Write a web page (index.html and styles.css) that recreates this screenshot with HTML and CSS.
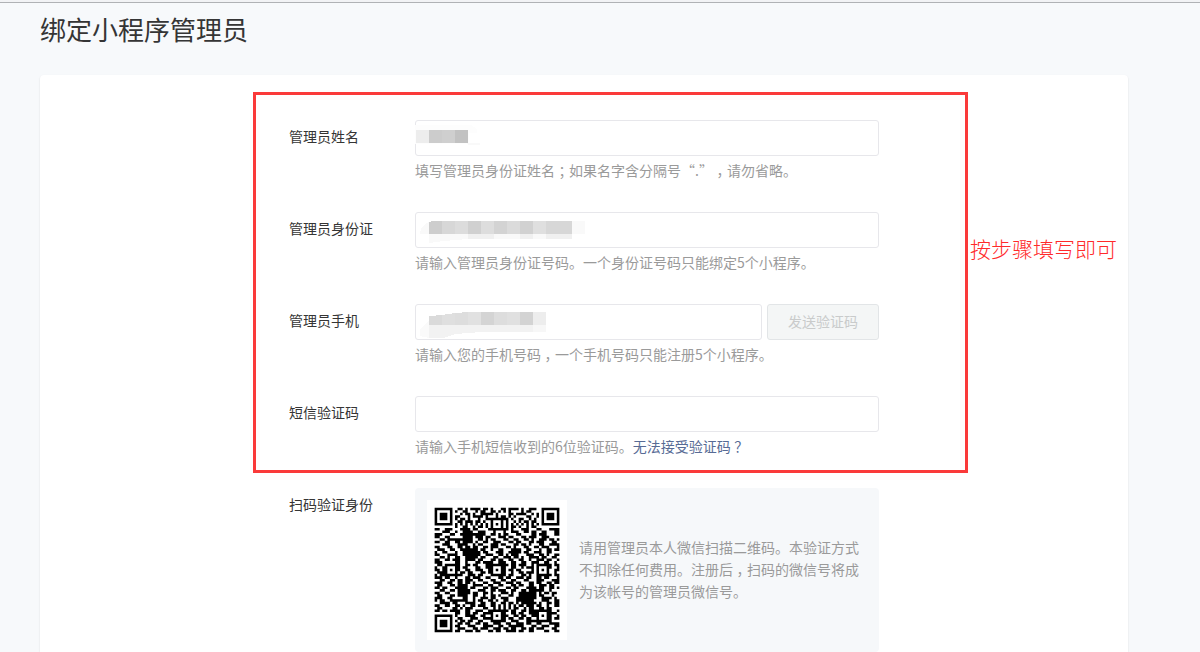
FILE: index.html
```html
<!DOCTYPE html>
<html lang="zh-CN">
<head>
<meta charset="utf-8">
<meta name="viewport" content="width=device-width, initial-scale=1">
<title>绑定小程序管理员</title>
<link rel="stylesheet" href="styles.css">
</head>
<body>
<header class="page-head">
  <h1 class="page-title">绑定小程序管理员</h1>
</header>
<main class="card">
  <form class="form">
    <div class="row">
      <label class="label" for="name">管理员姓名</label>
      <div class="control">
        <div class="field">
          <input class="input" id="name" type="text">
          <svg class="mosaic" viewBox="0 0 180 36" aria-hidden="true" shape-rendering="crispEdges">
            <path fill="#fdfdfd" d="M0 5h56l6 4v4H54v11H0z"/>
            <path fill="#ededed" d="M1 10h13v13H1z"/><path fill="#cccccc" d="M14 10h13v13H14z"/>
            <path fill="#cfcfcf" d="M27 10h13v13H27z"/><path fill="#c2c2c2" d="M40 10h13v13H40z"/>
            <path fill="#f9f9f9" d="M51 23h14v2H53z"/>
          </svg>
        </div>
        <p class="hint">填写管理员身份证姓名<span class="mid">；</span>如果名字含分隔号“.”<span class="mid">，</span>请勿省略。</p>
      </div>
    </div>
    <div class="row">
      <label class="label" for="idno">管理员身份证</label>
      <div class="control">
        <div class="field">
          <input class="input" id="idno" type="text">
          <svg class="mosaic" viewBox="0 0 180 36" aria-hidden="true" shape-rendering="crispEdges">
            <path fill="#f9f9f9" d="M5 22q0-8 9-12v12zM14 22h143v5H53l-24 2-15 2zM157 9h13v13h-13z"/>
            <path fill="#cdcdcd" d="M14 10l4-1h9v13H14z"/><path fill="#d7d7d7" d="M27 9h13v13H27z"/>
            <path fill="#dcdcdc" d="M40 9h13v13H40z"/><path fill="#d0d0d0" d="M53 9h13v13H53z"/>
            <path fill="#dddddd" d="M66 9h13v13H66z"/><path fill="#d3d3d3" d="M79 9h13v13H79z"/>
            <path fill="#dbdbdb" d="M92 9h13v13H92z"/><path fill="#d1d1d1" d="M105 9h13v13h-13z"/>
            <path fill="#dfdfdf" d="M118 9h13v13h-13z"/><path fill="#d7d7d7" d="M131 9h26v13h-26z"/>
            <path fill="#f0f0f0" d="M53 22h26v5H53zM105 22h13v5h-13zM131 22h26v5h-26z"/>
          </svg>
        </div>
        <p class="hint">请输入管理员身份证号码。一个身份证号码只能绑定5个小程序。</p>
      </div>
    </div>
    <div class="row">
      <label class="label" for="phone">管理员手机</label>
      <div class="control">
        <div class="field">
          <input class="input" id="phone" type="tel">
          <svg class="mosaic" viewBox="0 0 180 36" aria-hidden="true" shape-rendering="crispEdges">
            <path fill="#fafafa" d="M5 25l9-8v17l-9-2z"/>
            <path fill="#f2f2f2" d="M14 21h117v7H66l-26 2-12 4H14z"/>
            <path fill="#dadada" d="M14 12l13-1v10H14z"/><path fill="#dfdfdf" d="M27 11l13-2v12H27z"/>
            <path fill="#dddddd" d="M40 9l13-1v13H40z"/><path fill="#e1e1e1" d="M53 8h13v13H53z"/>
            <path fill="#d4d4d4" d="M66 8h13v13H66z"/><path fill="#dddddd" d="M79 8h13v13H79z"/>
            <path fill="#e0e0e0" d="M92 8h13v13H92z"/><path fill="#d3d3d3" d="M105 8h13v13h-13z"/>
            <path fill="#ededed" d="M118 8h13v13h-13z"/><path fill="#f7f7f7" d="M118 21h13v7h-13z"/>
          </svg>
          <button class="btn" type="button" disabled>发送验证码</button>
        </div>
        <p class="hint">请输入您的手机号码<span class="mid">，</span>一个手机号码只能注册5个小程序。</p>
      </div>
    </div>
    <div class="row">
      <label class="label" for="code">短信验证码</label>
      <div class="control">
        <div class="field"><input class="input" id="code" type="text"></div>
        <p class="hint">请输入手机短信收到的6位验证码。<a class="link" href="#">无法接受验证码<span class="mid">？</span></a></p>
      </div>
    </div>
    <div class="row row-last">
      <span class="label">扫码验证身份</span>
      <div class="control scan">
        <svg class="qr" viewBox="-3 -3 55 55" role="img" aria-label="二维码"><path id="modules" fill="#000"/></svg>
        <p class="scan-text">请用管理员本人微信扫描二维码。本验证方式不扣除任何费用。注册后<span class="mid">，</span>扫码的微信号将成为该帐号的管理员微信号。</p>
      </div>
    </div>
    <div class="callout"></div>
    <p class="callout-text">按步骤填写即可</p>
  </form>
</main>
<script src="qr.js"></script>
</body>
</html>
```
FILE: qr.js
```js
// Module rows of the code; finder, alignment and timing marks are stamped on top.
const rows = [
  "#######..##.#.####.##.#...##.####.#..###..#######",
  "#.....#.#..##...#.##..##.#.#.#....#.##....#.....#",
  "#.###.#...#.##.#..#####.#....##.####..#.#.#.###.#",
  "#.###.#.##...#.####.#...#.##.#.#....##..#.#.###.#",
  "#.###.#.#.##.#...#..##.######.#..##..#.#..#.###.#",
  "#.....#..##.###.##.#...##...#..#.#.##.##..#.....#",
  "#######.#.#.#.#.#.#.#.#.#.#.#.#.#.#.#.#.#.#######",
  "........#..##..#.##.#..##...#.##.#..#.##.........",
  "##..###...####.##....#.######.#...###...##...####",
  "...###..#..####..###...#...#..###..##.##..##...##",
  "###...##..##########..##.#.##...##....##.###...##",
  "##..##.....####.###.##...###.##...##.###..###....",
  "..##.##########..##.#.##...##..##..##.#..###.##.#",
  "##..##..##.####.#..##..###...##.##...##.###...##.",
  "...###...####..#.##...###.##...##.##.#...##..####",
  "##...##..##.##.##..##.###...##.#...##..##.###...#",
  ".###..##..#######.##..#..##...####..##...#..##.##",
  "#..##...#..#######.##...###..#####.##..###..##...",
  "##...####..#######..###..##.#.###...###..##.#..##",
  "..##.#..##..#####.##...##..###.##.#..####.##..##.",
  "##..##.###..####.##...##.##..##..##..#..###.##..#",
  "###.....##..#...##.####..###..##..##..###..##..#.",
  ".##.######..##.##...##.######.##.###..#.######.##",
  "#..##...##.##...##..##.#...#..##..#.###.#...##..#",
  "##.##.#.##..##..###..#.#.#.#.##.##....#.#.#.#..##",
  ".####...#.##.##...##.#.#...#..#..##.###.#...#..#.",
  "#.######.##..###.##...######.##...##.#..######.##",
  "###.##..#...##.###..##...##.##..###.##..##.##...#",
  "..##..##.##.###..##...##..##..##...##...###...###",
  "###..##..##.##.#...##..###..###.##...##.##..##.##",
  ".##...##.####..####..##..##...##.##..##..###.##..",
  "##.##...#####.##...##.###...##.##...####.##..##.#",
  "..##..##.#####...###..##.###..##..##.######..#...",
  "##..##...#####.##..##.#...###.#..#######.#.##.##.",
  ".##...##.####..##..#..##.#...##..#######.##...#..",
  "###..##....##..#..###.##..###...########..####.#.",
  "#.##..#######..#.##..##.#..##...#######...###..##",
  "..####.##...####..##..##..##.##.#.######.#..##.##",
  "##..##..##.#..##.###..##.#.#.#.#.##.###.##..#..##",
  ".##....##.#.###....##..#.#.#.#.##..#.##..##.##...",
  "##.##.####..##..###..#.######.##..##.#########..#",
  "........##..##.##..###.#...#..##.##..###....####.",
  "#######.#...####..##...#.#.##..##.##..###.#.##..#",
  "#.....#..##...###..###.#...#.##..##.##..#...##.##",
  "#.###.#.#.##.##..##...######..###...##########...",
  "#.###.#..##.##..##.##..###..##..###.##..##...####",
  "#.###.#.##...###...####..##..######...##..###..##",
  "#.....#..###...##.###..###.##.##..##.##.###...##.",
  "#######.##..###.##...##.##..####.##..##....##..##"
];

const grid = rows.map(row => [...row].map(cell => cell === "#"));

function stamp(cx, cy, radius, clear) {
  for (let y = -clear; y <= clear; y++) {
    for (let x = -clear; x <= clear; x++) {
      const line = grid[cy + y];
      if (!line || cx + x < 0 || cx + x > 48) continue;
      const d = Math.max(Math.abs(x), Math.abs(y));
      line[cx + x] = d <= radius && d !== radius - 1;
    }
  }
}

for (const [x, y] of [[3, 3], [45, 3], [3, 45]]) stamp(x, y, 3, 4);
for (const [x, y] of [[24, 6], [6, 24], [24, 24], [42, 24], [24, 42], [42, 42]]) stamp(x, y, 2, 2);

let path = "";
grid.forEach((line, y) => {
  for (let x = 0; x < 49; x++) {
    if (!line[x]) continue;
    let end = x;
    while (end < 49 && line[end]) end++;
    path += `M${x} ${y}h${end - x}v1h-${end - x}z`;
    x = end;
  }
});
document.getElementById("modules").setAttribute("d", path);
```
FILE: styles.css
```css
* {
  box-sizing: border-box;
}

body {
  margin: 0;
  background: #f7f9fb;
  color: #353535;
  font: 14px/22px "Noto Sans CJK SC", sans-serif;
  text-spacing-trim: space-all;
}

h1,
p {
  margin: 0;
}

.page-head {
  padding: 6px 40px 25px;
  border-top: 1px solid #b0b2b5;
  box-shadow: 0 -2px 0 #f2f3f5;
  margin-top: 2px;
}

.page-title {
  font-size: 26px;
  font-weight: 400;
  line-height: 40px;
}

.card {
  display: flex;
  justify-content: center;
  margin: 1px 72px 0 40px;
  padding-top: 45px;
  background: #fff;
  border-radius: 4px 4px 0 0;
  box-shadow: 0 1px 2px rgba(0, 0, 0, 0.12);
}

.form {
  position: relative;
  width: 590px;
}

.row {
  display: flex;
  margin-bottom: 31px;
}

.row-last {
  margin-bottom: 0;
}

.label {
  flex: 0 0 126px;
  padding-top: 5px;
}

.control {
  flex: 1;
}

.field {
  position: relative;
  display: flex;
  gap: 5px;
  margin-bottom: 3px;
}

.input {
  flex: 1;
  min-width: 0;
  height: 36px;
  padding: 0 10px;
  border: 1px solid #e7e7eb;
  border-radius: 3px;
  background: #fff;
  color: inherit;
  font: inherit;
}

.mosaic {
  position: absolute;
  top: 0;
  left: 0;
  width: 180px;
  height: 36px;
  pointer-events: none;
}

.btn {
  width: 112px;
  height: 36px;
  padding: 0 6px 2px;
  border: 1px solid #e2e5e7;
  border-radius: 3px;
  background: #f4f6f6;
  color: #c9cbcb;
  font: inherit;
}

.hint,
.scan-text {
  color: #9a9a9a;
}

.mid {
  display: inline-block;
  width: 14px;
  text-align: center;
  text-spacing-trim: trim-both;
  font-feature-settings: "halt";
}

.link {
  color: #576b95;
  text-decoration: none;
}

.scan {
  display: flex;
  align-items: center;
  gap: 12px;
  padding: 12px;
  border-radius: 4px;
  background: #f6f8fa;
}

.qr {
  flex: none;
  width: 140px;
  height: 140px;
  background: #fff;
}

.scan-text {
  width: 280px;
  padding-bottom: 2px;
}

.callout {
  position: absolute;
  top: -28px;
  left: -36px;
  width: 715px;
  height: 381px;
  border: 3px solid #fa3a3a;
  pointer-events: none;
}

.callout-text {
  position: absolute;
  top: 114px;
  left: 681px;
  color: #ff2a2a;
  font-size: 21px;
  font-weight: 300;
  line-height: 28px;
  white-space: nowrap;
}
```
